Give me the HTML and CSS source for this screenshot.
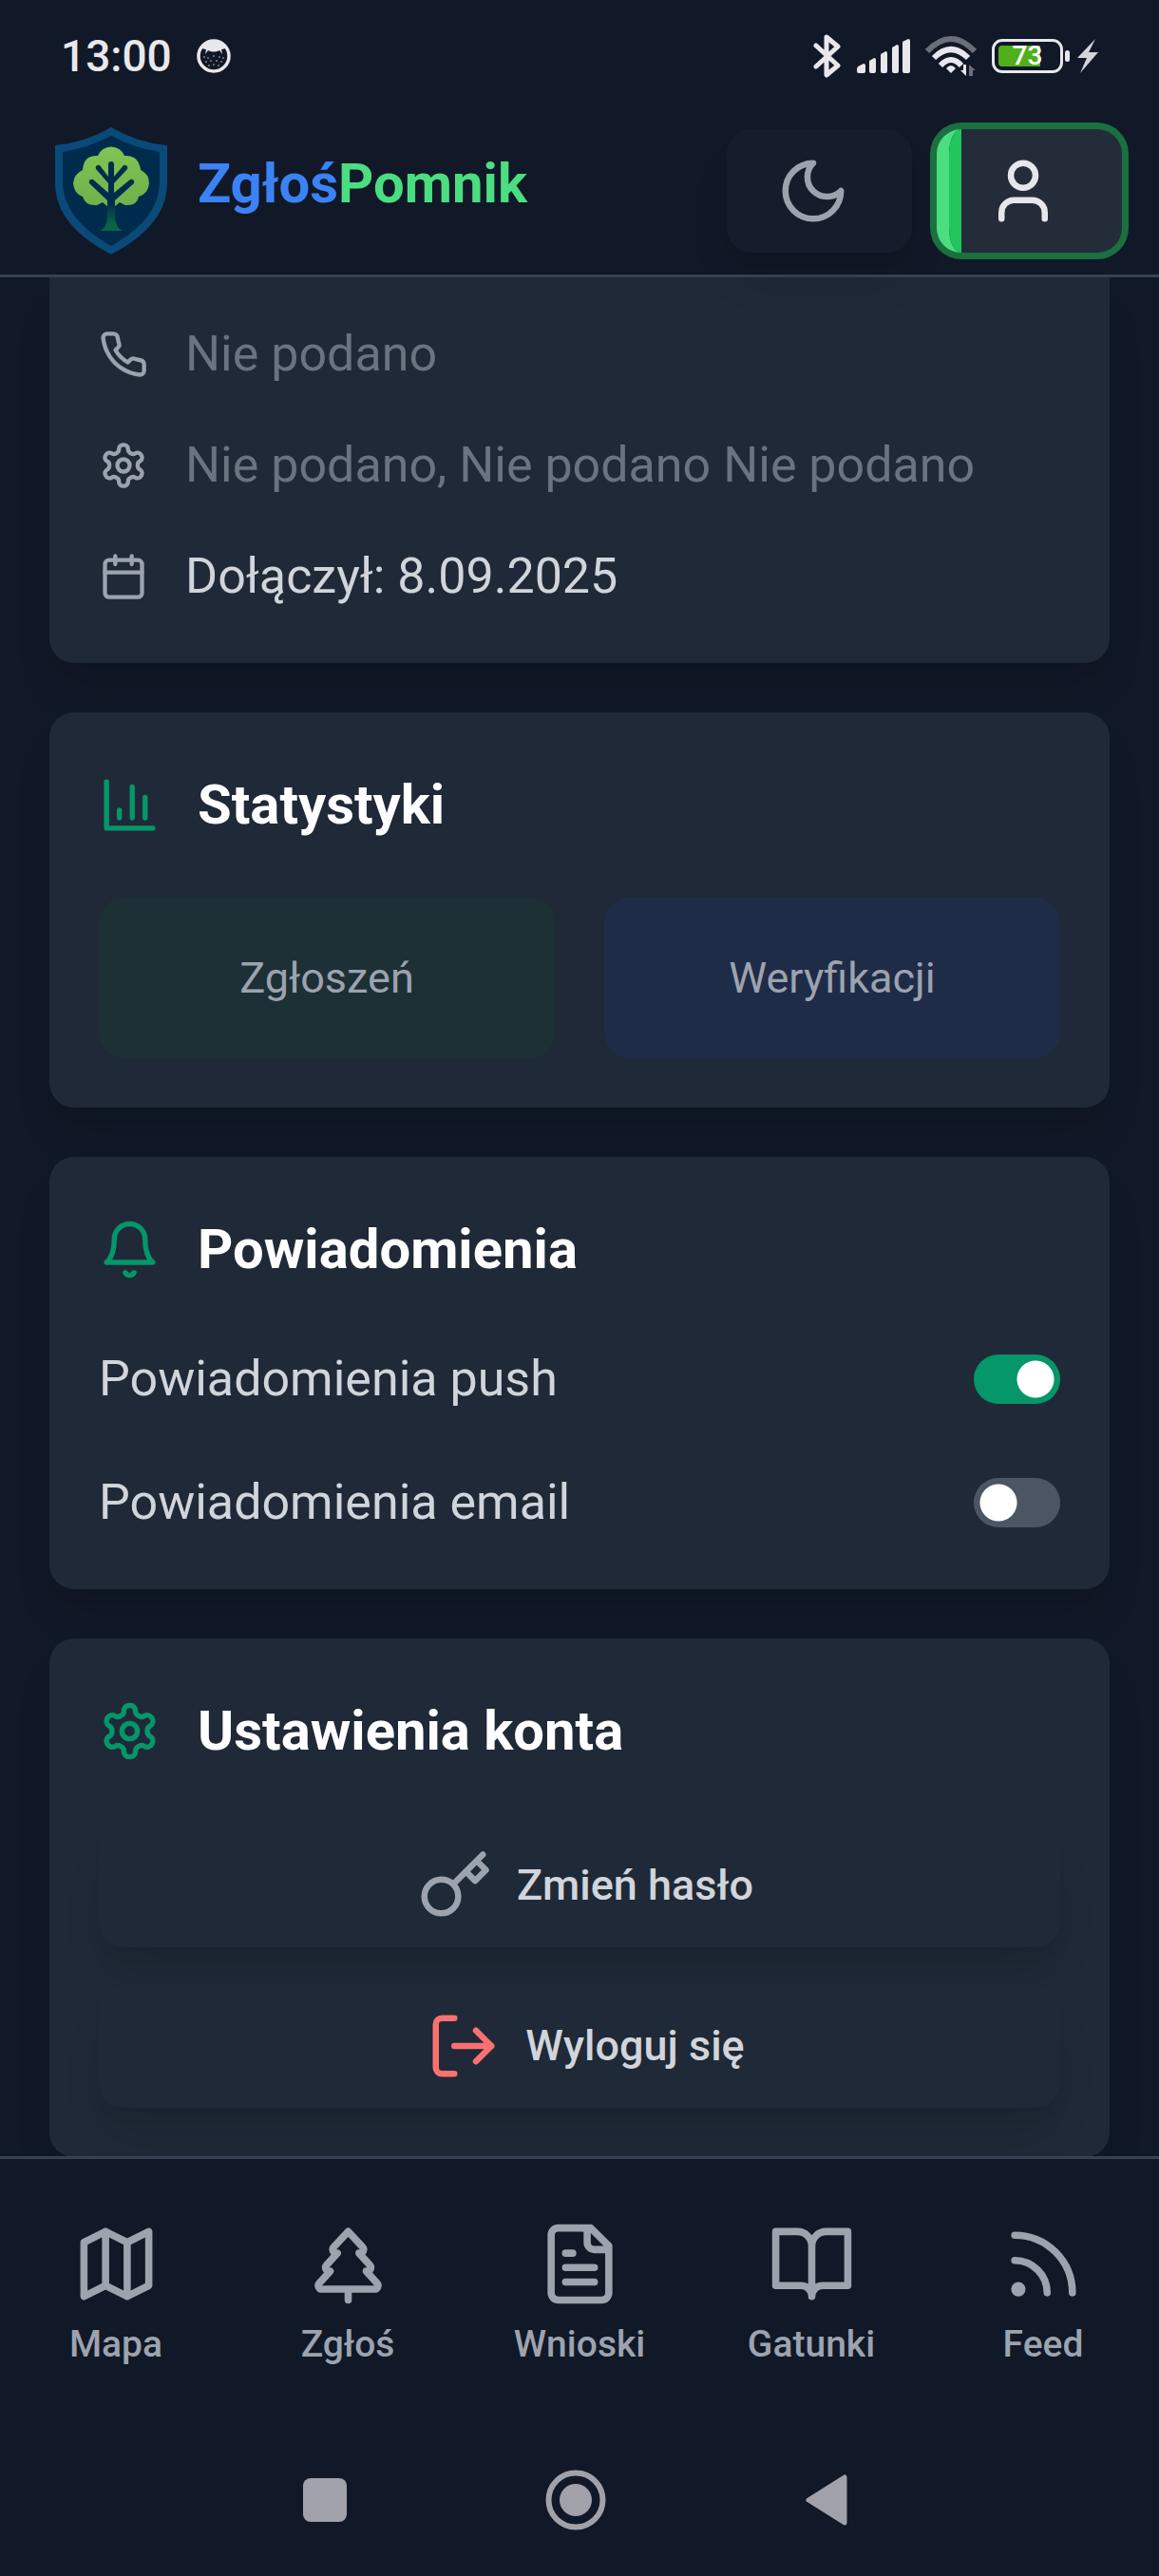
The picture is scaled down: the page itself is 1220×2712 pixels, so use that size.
FILE: index.html
```html
<!DOCTYPE html>
<html lang="pl">
<head>
<meta charset="utf-8">
<meta name="viewport" content="width=device-width, initial-scale=1">
<title>ZgłośPomnik – Profil</title>
<link rel="stylesheet" href="styles.css">
</head>
<body>
<svg class="sprite" aria-hidden="true">
  <symbol id="settings" viewBox="0 0 24 24">
    <path d="M12.22 2h-.44a2 2 0 0 0-2 2v.18a2 2 0 0 1-1 1.73l-.43.25a2 2 0 0 1-2 0l-.15-.08a2 2 0 0 0-2.73.73l-.22.38a2 2 0 0 0 .73 2.73l.15.1a2 2 0 0 1 1 1.72v.51a2 2 0 0 1-1 1.74l-.15.09a2 2 0 0 0-.73 2.73l.22.38a2 2 0 0 0 2.73.73l.15-.08a2 2 0 0 1 2 0l.43.25a2 2 0 0 1 1 1.73V20a2 2 0 0 0 2 2h.44a2 2 0 0 0 2-2v-.18a2 2 0 0 1 1-1.73l.43-.25a2 2 0 0 1 2 0l.15.08a2 2 0 0 0 2.73-.73l.22-.39a2 2 0 0 0-.73-2.73l-.15-.08a2 2 0 0 1-1-1.74v-.5a2 2 0 0 1 1-1.74l.15-.09a2 2 0 0 0 .73-2.73l-.22-.38a2 2 0 0 0-2.73-.73l-.15.08a2 2 0 0 1-2 0l-.43-.25a2 2 0 0 1-1-1.73V4a2 2 0 0 0-2-2z"/>
    <circle cx="12" cy="12" r="3"/>
  </symbol>
</svg>
<div class="app">
  <div class="status-bar">
    <div class="status-group">
      <span class="clock">13:00</span>
      <svg class="status-face" width="36" height="36" viewBox="0 0 36 36" aria-hidden="true">
        <circle cx="18" cy="18" r="16" fill="none" stroke="#e8e8ec" stroke-width="3.500"/>
        <path d="M5 9C11 0 25 0 31 9Q29 11 26 11L27 16 24 12Q18 15 12 12L9 16 10 11Q7 11 5 9Z" fill="#e8e8ec"/>
        <g fill="#c9cbd1"><circle cx="8" cy="19" r=".8"/><circle cx="12" cy="20" r=".8"/><circle cx="18" cy="18" r=".8"/><circle cx="24" cy="19" r=".8"/><circle cx="28" cy="20" r=".8"/><circle cx="10" cy="24" r=".8"/><circle cx="15" cy="23" r=".8"/><circle cx="21" cy="23" r=".8"/><circle cx="26" cy="24" r=".8"/><circle cx="13" cy="28" r=".8"/><circle cx="18" cy="27" r=".8"/><circle cx="23" cy="28" r=".8"/></g>
      </svg>
    </div>
    <div class="status-group status-right">
      <svg width="30" height="46" viewBox="0 0 30 46" fill="none" stroke="#e8e8ec" stroke-width="5" stroke-linecap="round" stroke-linejoin="round" aria-hidden="true"><path d="M3 12 26 33 14 43V3L26 13 3 34"/></svg>
      <svg class="signal" width="56" height="36" viewBox="0 0 56 36" fill="#e8e8ec" aria-hidden="true"><path d="M0 32q0-3 3-4l4-2q2 0 2 2v6q0 2-2 2H2q-2 0-2-2zM13 24q0-2 2-2l3-2q2 0 2 2v12q0 2-2 2h-3q-2 0-2-2zM25 17q0-2 2-2l3-2q2 0 2 2v19q0 2-2 2h-3q-2 0-2-2zM37 10q0-2 2-2l3-2q2 0 2 2v26q0 2-2 2h-3q-2 0-2-2zM48 4q0-2 2-2l4-2q2 0 2 2v32q0 2-2 2h-4q-2 0-2-2z"/></svg>
      <svg class="wifi" width="54" height="42" viewBox="0 0 54 42" fill="none" stroke="#e8e8ec" stroke-width="6" aria-hidden="true">
        <path d="M2 16Q27-10 52 16" stroke="#6b6f7a"/><path d="M9 23Q27 5 45 23M16 31Q27 19 38 31"/><path d="M27 39l-5-5q5-6 10 0z" fill="#e8e8ec" stroke="none"/>
        <path d="M43 30v12l-6-6h3v-6z" fill="#e8e8ec" stroke="none"/><path d="M46 42V30l7 6h-3v6z" fill="#6b6f7a" stroke="none"/>
      </svg>
      <span class="power">
        <span class="battery"><span class="battery-case"><span class="battery-level">73</span></span><span class="battery-tip"></span></span>
        <svg class="bolt" width="22" height="36" viewBox="0 0 22 36" fill="#d4d4d9" aria-hidden="true"><path d="M19 0 0 20H10L3 36 22 14H12Z"/></svg>
      </span>
    </div>
  </div>

  <header class="header">
    <a class="brand" href="#">
      <svg class="logo" viewBox="0 0 130 136" aria-hidden="true">
        <defs>
          <linearGradient id="trunk" x1="0" y1="0" x2="0" y2="1"><stop offset=".6" stop-color="#002b4c"/><stop offset=".9" stop-color="#0a6347"/></linearGradient>
          <linearGradient id="crown" x1="0" y1="0" x2="0" y2="1"><stop offset="0" stop-color="#81c554"/><stop offset="1" stop-color="#6fb04b"/></linearGradient>
        </defs>
        <path d="M65 1Q92 17 124 20V60Q124 104 65 135 6 104 6 60V20Q38 17 65 1Z" fill="#0a4a79"/>
        <path d="M65 10Q90 23 116 27V60Q115 98 65 126 15 98 14 60V27Q40 23 65 10Z" fill="#002b4c"/>
        <path d="M51 31A15 15 0 0 1 79 31Q94 30 96 46 105 50 105 60 104 71 94 74 92 84 80 83L74 80 68 85 62 85 56 80 50 83Q38 84 35 74 26 71 25 60 26 50 35 46 36 30 51 31Z" fill="url(#crown)"/>
        <path d="M62 40a3 3 0 0 1 6 0v13l10-12a3 3 0 0 1 4 4L68 60v10l17-14a3 3 0 0 1 4 4L69 78v14q0 15 8 18H53q8-3 8-18V78L42 60a3 3 0 0 1 4-4l16 14V60L49 45a3 3 0 0 1 4-4l9 12Z" fill="url(#trunk)"/>
      </svg>
      <span class="brand-name"><span class="brand-first">Zgłoś</span><span class="brand-second">Pomnik</span></span>
    </a>
    <div class="header-actions">
      <button class="icon-button" type="button" aria-label="Tryb ciemny"><svg class="icon" viewBox="0 0 24 24"><path d="M12 3a6 6 0 0 0 9 9 9 9 0 1 1-9-9Z"/></svg></button>
      <button class="icon-button icon-button-active" type="button" aria-label="Profil"><svg class="icon" viewBox="0 0 24 24"><path d="M19 21v-2a4 4 0 0 0-4-4H9a4 4 0 0 0-4 4v2"/><circle cx="12" cy="7" r="4"/></svg></button>
    </div>
  </header>

  <main class="content">
    <section class="card card-continued">
      <ul class="details">
        <li class="muted"><svg class="icon icon-small" viewBox="0 0 24 24"><path d="M22 16.92v3a2 2 0 0 1-2.18 2 19.79 19.79 0 0 1-8.63-3.07 19.5 19.5 0 0 1-6-6 19.79 19.79 0 0 1-3.07-8.67A2 2 0 0 1 4.11 2h3a2 2 0 0 1 2 1.72 12.84 12.84 0 0 0 .7 2.81 2 2 0 0 1-.45 2.11L8.09 9.91a16 16 0 0 0 6 6l1.27-1.27a2 2 0 0 1 2.11-.45 12.84 12.84 0 0 0 2.81.7A2 2 0 0 1 22 16.92z"/></svg><span>Nie podano</span></li>
        <li class="muted"><svg class="icon icon-small"><use href="#settings"/></svg><span>Nie podano, Nie podano Nie podano</span></li>
        <li><svg class="icon icon-small" viewBox="0 0 24 24"><path d="M8 2v4M16 2v4M3 10h18"/><rect x="3" y="4" width="18" height="18" rx="2"/></svg><span>Dołączył: 8.09.2025</span></li>
      </ul>
    </section>

    <section class="card">
      <h2 class="card-title"><svg class="icon icon-title" viewBox="0 0 24 24"><path d="M3 3v18h18M18 17V9M13 17V5M8 17v-3"/></svg>Statystyki</h2>
      <div class="stats">
        <div class="stat stat-green">Zgłoszeń</div>
        <div class="stat stat-blue">Weryfikacji</div>
      </div>
    </section>

    <section class="card">
      <h2 class="card-title"><svg class="icon icon-title" viewBox="0 0 24 24"><path d="M6 8a6 6 0 0 1 12 0c0 7 3 9 3 9H3s3-2 3-9M10.3 21a1.94 1.94 0 0 0 3.4 0"/></svg>Powiadomienia</h2>
      <div class="options">
        <label class="option" for="push">Powiadomienia push<input class="switch" type="checkbox" role="switch" id="push" checked></label>
        <label class="option" for="email">Powiadomienia email<input class="switch" type="checkbox" role="switch" id="email"></label>
      </div>
    </section>

    <section class="card">
      <h2 class="card-title"><svg class="icon icon-title"><use href="#settings"/></svg>Ustawienia konta</h2>
      <div class="account-actions">
        <button class="action" type="button"><svg class="icon" viewBox="0 0 24 24"><path d="m21 2-2 2m-7.61 7.61a5.5 5.5 0 1 1-7.778 7.778 5.5 5.5 0 0 1 7.777-7.777zm0 0L15.5 7.5m0 0 3 3L22 7l-3-3m-3.5 3.5L19 4"/></svg>Zmień hasło</button>
        <button class="action" type="button"><svg class="icon icon-danger" viewBox="0 0 24 24"><path d="M9 21H5a2 2 0 0 1-2-2V5a2 2 0 0 1 2-2h4M16 17l5-5-5-5M21 12H9"/></svg>Wyloguj się</button>
      </div>
    </section>
  </main>

  <footer class="footer">
    <nav class="tabs">
      <a class="tab" href="#"><svg class="icon icon-tab" viewBox="0 0 24 24"><path d="M3 6l6-3 6 3 6-3v15l-6 3-6-3-6 3zM9 3v15M15 6v15"/></svg>Mapa</a>
      <a class="tab" href="#"><svg class="icon icon-tab" viewBox="0 0 24 24"><path d="m17 14 3 3.3a1 1 0 0 1-.7 1.7H4.7a1 1 0 0 1-.7-1.7L7 14h-.3a1 1 0 0 1-.7-1.7L9 9h-.2A1 1 0 0 1 8 7.3L12 3l4 4.3a1 1 0 0 1-.8 1.7H15l3 3.3a1 1 0 0 1-.7 1.7H17ZM12 22v-3"/></svg>Zgłoś</a>
      <a class="tab" href="#"><svg class="icon icon-tab" viewBox="0 0 24 24"><path d="M15 2H6a2 2 0 0 0-2 2v16a2 2 0 0 0 2 2h12a2 2 0 0 0 2-2V7ZM14 2v4a2 2 0 0 0 2 2h4M10 9H8M16 13H8M16 17H8"/></svg>Wnioski</a>
      <a class="tab" href="#"><svg class="icon icon-tab" viewBox="0 0 24 24"><path d="M2 3h6a4 4 0 0 1 4 4v14a3 3 0 0 0-3-3H2zM22 3h-6a4 4 0 0 0-4 4v14a3 3 0 0 1 3-3h7z"/></svg>Gatunki</a>
      <a class="tab" href="#"><svg class="icon icon-tab" viewBox="0 0 24 24"><path d="M4 11a9 9 0 0 1 9 9M4 4a16 16 0 0 1 16 16"/><circle cx="5" cy="19" r="1"/></svg>Feed</a>
    </nav>
    <div class="system-bar">
      <button class="system-button" type="button" aria-label="Ostatnie aplikacje"><svg viewBox="0 0 64 64"><rect x="9" y="9" width="46" height="46" rx="8"/></svg></button>
      <button class="system-button" type="button" aria-label="Ekran główny"><svg viewBox="0 0 64 64"><circle cx="32" cy="32" r="28.500" fill="none" stroke="currentColor" stroke-width="6"/><circle cx="32" cy="32" r="17"/></svg></button>
      <button class="system-button" type="button" aria-label="Wstecz"><svg viewBox="0 0 64 64"><path d="M13 32 51 8V56Z" stroke="currentColor" stroke-width="5" stroke-linejoin="round"/></svg></button>
    </div>
  </footer>
</div>
</body>
</html>
```
FILE: styles.css
```css
* {
  box-sizing: border-box;
}

body {
  margin: 0;
  background: #111827;
  color: #d1d5db;
  font-family: Roboto, "Noto Sans", sans-serif;
  font-size: 52px;
  line-height: 78px;
}

button {
  margin: 0;
  border: 0;
  font: inherit;
}

a {
  color: inherit;
  text-decoration: none;
}

.sprite {
  position: absolute;
  width: 0;
  height: 0;
}

.app {
  display: flex;
  flex-direction: column;
  height: 100vh;
}

/* Status bar */

.status-bar {
  display: flex;
  flex: none;
  align-items: center;
  justify-content: space-between;
  height: 118px;
  padding: 0 64px;
  color: #e8e8ec;
}

.status-group {
  display: flex;
  align-items: center;
  gap: 26px;
}

.status-right {
  gap: 16px;
}

.clock {
  font-size: 46px;
  font-weight: 500;
}

.power {
  display: flex;
  align-items: center;
  gap: 8px;
}

.battery {
  display: flex;
  align-items: center;
  gap: 2px;
}

.battery-case {
  width: 75px;
  height: 36px;
  padding: 4px;
  border: 3px solid #e8e8ec;
  border-radius: 11px;
}

.battery-level {
  display: block;
  height: 22px;
  border-radius: 4px;
  background: linear-gradient(90deg, #4fb01a 72%, transparent 72%);
  color: #fff;
  font-size: 28px;
  font-weight: 500;
  line-height: 22px;
  text-align: center;
}

.battery-tip {
  width: 5px;
  height: 12px;
  border-radius: 3px;
  background: #e8e8ec;
}

/* Header */

.header {
  position: relative;
  z-index: 1;
  display: flex;
  flex: none;
  align-items: center;
  justify-content: space-between;
  padding: 15px 39px 20px 52px;
  border-bottom: 3px solid #374151;
}

.brand {
  display: flex;
  align-items: center;
  gap: 26px;
}

.logo {
  width: 130px;
  height: 136px;
}

.brand-name {
  padding-bottom: 16px;
  font-size: 58px;
  font-weight: 700;
}

.brand-first {
  color: #3b82f6;
}

.brand-second {
  color: #4ade80;
}

.header-actions {
  display: flex;
  gap: 26px;
}

.icon {
  flex: none;
  width: 78px;
  height: 78px;
  fill: none;
  stroke: currentColor;
  stroke-width: 2;
  stroke-linecap: round;
  stroke-linejoin: round;
}

.icon-button {
  position: relative;
  display: flex;
  align-items: center;
  height: 130px;
  padding: 0 65px 0 39px;
  border-left: 13px solid transparent;
  border-radius: 26px;
  background: #161c2b;
  box-shadow: 0 33px 49px -10px rgba(0, 0, 0, 0.1), 0 13px 20px -13px rgba(0, 0, 0, 0.1);
  color: #9ca3af;
}

.icon-button-active {
  overflow: hidden;
  border-left-color: #4ade80;
  background: #242c3a;
  box-shadow: 0 0 0 7px #1b7040;
  color: #e5e7eb;
}

.icon-button-active::before {
  content: "";
  position: absolute;
  top: 0;
  bottom: 0;
  left: 0;
  width: 13px;
  background: #22c55e;
}

/* Cards */

.content {
  display: flex;
  flex: 1;
  flex-direction: column;
  gap: 52px;
  min-height: 0;
  padding: 0 52px;
  overflow: hidden;
}

.card {
  flex: none;
  padding: 52px;
  border-radius: 26px;
  background: #1f2937;
  box-shadow: 0 33px 49px -10px rgba(0, 0, 0, 0.1), 0 13px 20px -13px rgba(0, 0, 0, 0.1);
}

.card-continued {
  padding-top: 42px;
  border-top-left-radius: 0;
  border-top-right-radius: 0;
}

.details {
  display: flex;
  flex-direction: column;
  gap: 39px;
  margin: 0;
  padding: 0;
  list-style: none;
}

.details li {
  display: flex;
  align-items: center;
  gap: 39px;
}

.details .muted {
  color: #6b7280;
}

.details .icon-small {
  width: 52px;
  height: 52px;
  color: #9ca3af;
}

.card-title {
  display: flex;
  align-items: center;
  gap: 39px;
  margin: 0 0 52px;
  color: #fff;
  font-size: 58px;
  font-weight: 700;
  line-height: 91px;
}

.icon-title {
  width: 65px;
  height: 65px;
  color: #059669;
}

.stats {
  display: grid;
  grid-template-columns: 1fr 1fr;
  gap: 52px;
}

.stat {
  padding: 52px;
  border-radius: 26px;
  color: #9ca3af;
  font-size: 45px;
  line-height: 65px;
  text-align: center;
}

.stat-green {
  background: #1c3036;
}

.stat-blue {
  background: #1f2c48;
}

.options {
  display: flex;
  flex-direction: column;
  gap: 52px;
}

.option {
  display: flex;
  align-items: center;
  justify-content: space-between;
}

.switch {
  width: 91px;
  height: 52px;
  margin: 0;
  border-radius: 26px;
  appearance: none;
  background: radial-gradient(circle at 26px 26px, #fff 19px, #4b5563 20px);
}

.switch:checked {
  background: radial-gradient(circle at 65px 26px, #fff 19px, #059669 20px);
}

.account-actions {
  display: flex;
  flex-direction: column;
  gap: 39px;
}

.action {
  display: flex;
  align-items: center;
  justify-content: center;
  gap: 26px;
  height: 130px;
  border-left: 13px solid transparent;
  border-radius: 26px;
  background: #1f2937;
  box-shadow: 0 33px 49px -10px rgba(0, 0, 0, 0.1), 0 13px 20px -13px rgba(0, 0, 0, 0.1);
  color: #d1d5db;
  font-size: 45px;
  font-weight: 500;
}

.action .icon {
  color: #9ca3af;
}

.action .icon-danger {
  color: #f87171;
}

/* Bottom navigation */

.footer {
  position: relative;
  flex: none;
  border-top: 3px solid #374151;
  background: #111827;
}

.tabs {
  display: grid;
  grid-template-columns: repeat(5, 1fr);
  padding: 65px 0 58px;
}

.tab {
  display: flex;
  flex-direction: column;
  align-items: center;
  gap: 13px;
  color: #9ca3af;
  font-size: 39px;
  font-weight: 500;
  line-height: 52px;
}

.icon-tab {
  width: 91px;
  height: 91px;
}

.system-bar {
  display: flex;
  align-items: center;
  justify-content: center;
  gap: 200px;
  height: 160px;
  padding-right: 8px;
}

.system-button {
  width: 64px;
  height: 64px;
  padding: 0;
  background: none;
  color: #a1a1aa;
}

.system-button svg {
  display: block;
  fill: currentColor;
}
```
